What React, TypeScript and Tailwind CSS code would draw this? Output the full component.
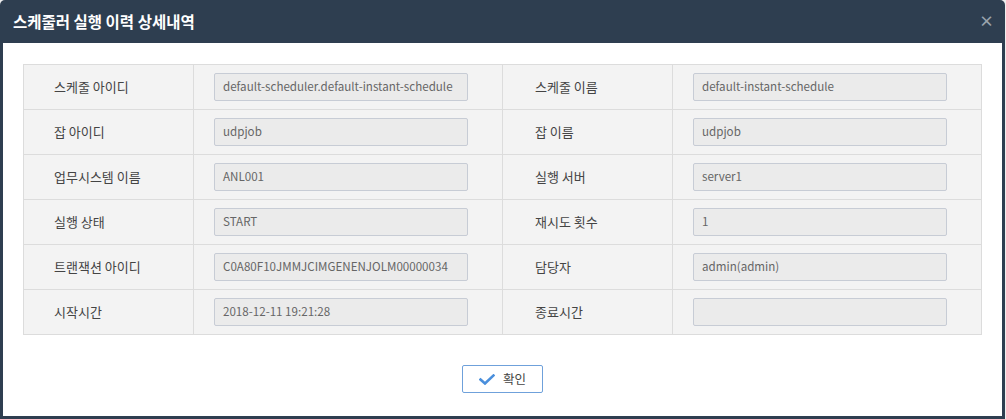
import React from "react";

const rows: [string, string, string, string][] = [
  ["스케줄 아이디", "default-scheduler.default-instant-schedule", "스케줄 이름", "default-instant-schedule"],
  ["잡 아이디", "udpjob", "잡 이름", "udpjob"],
  ["업무시스템 이름", "ANL001", "실행 서버", "server1"],
  ["실행 상태", "START", "재시도 횟수", "1"],
  ["트랜잭션 아이디", "C0A80F10JMMJCIMGENENJOLM00000034", "담당자", "admin(admin)"],
  ["시작시간", "2018-12-11 19:21:28", "종료시간", ""],
];

function Label({ text, pl }: { text: string; pl: string }) {
  return (
    <div className={`h-[45px] border-r border-b border-[#dcdcdc] flex items-center text-[13px] text-[#444] ${pl}`}>
      {text}
    </div>
  );
}

function Value({ text }: { text: string }) {
  return (
    <div className="h-[45px] border-r border-b border-[#dcdcdc] flex items-center pl-[20px]">
      <div className="w-[254px] h-[28px] bg-[#ebebeb] border border-[#c7ccd5] rounded-[2px] flex items-center pl-[8px] text-[11.6px] text-[#666] whitespace-nowrap overflow-hidden">
        {text}
      </div>
    </div>
  );
}

export default function App() {
  return (
    <div
      className="w-[1006px] h-[419px] bg-[#eeeeee] overflow-hidden"
      style={{ fontFamily: '"Noto Sans CJK KR", "Noto Sans", sans-serif' }}
    >
      <div className="w-[1005px] h-[419px] bg-[#2e3e50] rounded-t-[5px] px-[3px] pb-[3px] flex flex-col">
        <div className="h-[43px] flex items-center justify-between -mx-[3px] pl-[13px] pr-[11px]">
          <span className="text-white font-bold text-[15.5px] leading-none">스케줄러 실행 이력 상세내역</span>
          <span className="text-[#9aa3ad] font-bold text-[15px] leading-none mb-[3px]">×</span>
        </div>
        <div className="flex-1 bg-white px-[20px] pt-[21px] flex flex-col items-start">
          <div className="w-[959px] grid grid-cols-[170px_309px_170px_309px] border-l border-t border-[#dcdcdc] bg-[#f3f3f3]">
            {rows.map((r, i) => (
              <React.Fragment key={i}>
                <Label text={r[0]} pl="pl-[30px]" />
                <Value text={r[1]} />
                <Label text={r[2]} pl="pl-[32px]" />
                <Value text={r[3]} />
              </React.Fragment>
            ))}
          </div>
          <div className="w-full flex justify-center mt-[30px]">
            <button className="w-[81px] h-[28px] border border-[#6fa1db] rounded-[2px] bg-white flex items-center justify-center gap-[8px] text-[12.5px] text-[#444]">
              <svg width="16" height="11" viewBox="0 0 16 11" fill="none">
                <path d="M1.5 5.5 L6 9.5 L14.5 1.5" stroke="#4a8fdc" strokeWidth="2.6" strokeLinecap="square" />
              </svg>
              <span>확인</span>
            </button>
          </div>
        </div>
      </div>
    </div>
  );
}
